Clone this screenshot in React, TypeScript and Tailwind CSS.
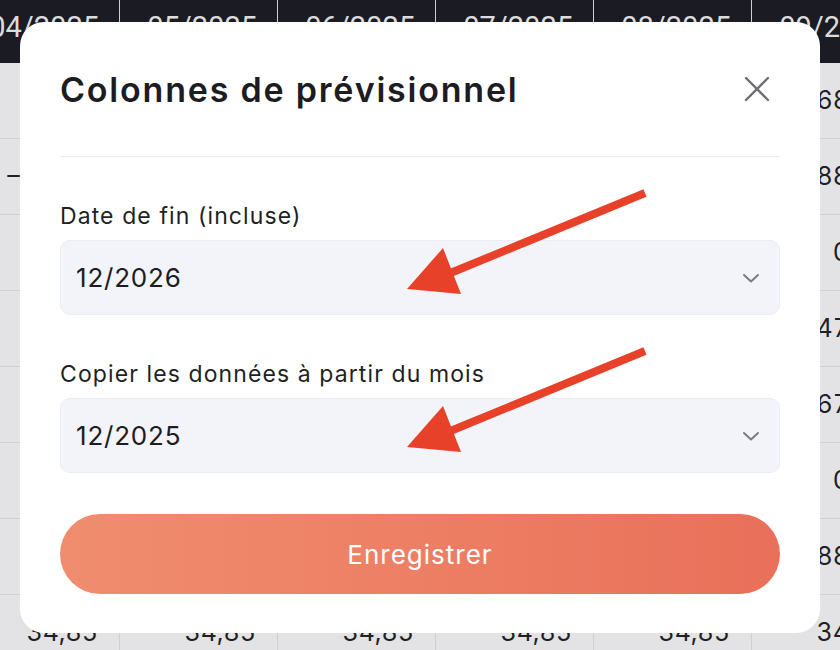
import React from "react";

const cols = [
  { head: "04/2025", vals: ["", "– 88,00", "", "", "", "", "", "34,85"] },
  { head: "05/2025", vals: ["", "", "", "", "", "", "", "34,85"] },
  { head: "06/2025", vals: ["", "", "", "", "", "", "", "34,85"] },
  { head: "07/2025", vals: ["", "", "", "", "", "", "", "34,85"] },
  { head: "08/2025", vals: ["", "", "", "", "", "", "", "34,85"] },
  { head: "09/2025", vals: ["1 268,45", "1 288,00", "0,00", "2 147,12", "1 367,50", "0,00", "1 288,00", "34,85"] },
];

function Chevron() {
  return (
    <svg width="18" height="12" viewBox="0 0 18 12" className="shrink-0">
      <polyline points="2,3 9,9.5 16,3" fill="none" stroke="#7b7b82" strokeWidth="2" strokeLinecap="round" strokeLinejoin="round" />
    </svg>
  );
}

function Select({ value }: { value: string }) {
  return (
    <div className="h-[75px] w-full rounded-[10px] bg-[#f3f4f9] border border-[#ecedf2] flex items-center justify-between pl-[15px] pr-[19px]">
      <span className="text-[26px] text-[#1c1c22] tracking-[0.8px]">{value}</span>
      <Chevron />
    </div>
  );
}

export default function App() {
  return (
    <div className="relative w-[840px] h-[650px] overflow-hidden bg-[#e3e3e5]" style={{ fontFamily: "Inter, 'Noto Sans', sans-serif" }}>
      {/* background table */}
      <div className="flex ml-[-38px]">
        {cols.map((c, i) => (
          <div key={i} className="w-[158px] shrink-0 border-r border-[#cfcfd4] flex flex-col">
            <div className="h-[63px] bg-[#1b1c23] flex items-start justify-end pr-[20px] pt-[6px]">
              <span className="text-[29px] text-[#dcdcde]" style={{ fontFamily: "Roboto, sans-serif" }}>{c.head}</span>
            </div>
            {c.vals.map((v, j) => (
              <div key={j} className="h-[76px] border-b border-[#cfcfd4] flex items-center justify-end pr-[21px]">
                <span className="text-[25px] text-[#1f1f24] tabular-nums whitespace-pre">{v}</span>
              </div>
            ))}
          </div>
        ))}
      </div>

      {/* modal */}
      <div className="absolute left-[20px] top-[22px] w-[800px] h-[611px] bg-white rounded-[24px] px-[40px] pt-[40px] flex flex-col">
        <div className="h-[54px] flex items-center justify-between">
          <h2 className="text-[34px] font-semibold text-[#1c1c22] tracking-[1.8px]">Colonnes de prévisionnel</h2>
          <svg width="26" height="26" viewBox="0 0 26 26" className="mr-[10px]">
            <line x1="2" y1="2" x2="24" y2="24" stroke="#6e6e74" strokeWidth="2.4" strokeLinecap="round" />
            <line x1="24" y1="2" x2="2" y2="24" stroke="#6e6e74" strokeWidth="2.4" strokeLinecap="round" />
          </svg>
        </div>
        <div className="mt-[40px] h-px bg-[#ececf0]" />
        <div className="mt-[44px] h-[30px] flex items-center text-[23px] tracking-[1.1px] text-[#1f1f24]">Date de fin (incluse)</div>
        <div className="mt-[9px]">
          <Select value="12/2026" />
        </div>
        <div className="mt-[44px] h-[30px] flex items-center text-[23px] tracking-[1.1px] text-[#1f1f24]">Copier les données à partir du mois</div>
        <div className="mt-[9px]">
          <Select value="12/2025" />
        </div>
        <button className="mt-[41px] h-[80px] w-full rounded-full bg-gradient-to-r from-[#f08d6f] to-[#e9705a] text-white text-[26px] tracking-[1px] flex items-center justify-center">
          Enregistrer
        </button>
      </div>

      {/* annotation arrows */}
      <svg className="absolute left-0 top-0 pointer-events-none" width="840" height="650" viewBox="0 0 840 650">
        <g>
          <line x1="645" y1="193" x2="448" y2="274" stroke="#e8412a" strokeWidth="8" />
          <polygon points="407,289 443,248 461,294" fill="#e8412a" />
        </g>
        <g>
          <line x1="645" y1="351" x2="448" y2="432" stroke="#e8412a" strokeWidth="8" />
          <polygon points="407,447 443,406 461,452" fill="#e8412a" />
        </g>
      </svg>
    </div>
  );
}
